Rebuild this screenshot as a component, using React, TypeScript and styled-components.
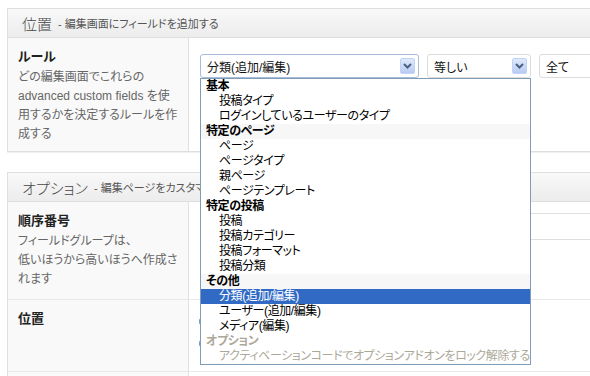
import React from "react";
import styled, { createGlobalStyle } from "styled-components";

const GlobalStyle = createGlobalStyle`
  html, body {
    margin: 0;
    padding: 0;
    background: #ffffff;
    overflow: hidden;
  }
  body {
    font-family: "Liberation Sans", "Noto Sans CJK JP", sans-serif;
    font-size: 12px;
    color: #333;
    font-feature-settings: "palt";
  }
`;

const Page = styled.div`
  padding: 8px 0 0 7px;
  width: 640px;
`;

const Box = styled.div`
  border: 1px solid #dfdfdf;
  background: #fff;
  margin-bottom: 20px;
  box-shadow: 0 1px 0 #f0f0f0;
`;

const Header = styled.div`
  height: 28px;
  display: flex;
  align-items: center;
  padding-left: 14px;
  background: linear-gradient(to bottom, #f9f9f9, #ececec);
  border-bottom: 1px solid #dfdfdf;
  color: #464646;
`;

const Title = styled.span`
  font-size: 15px;
  font-weight: 300;
  margin-right: 6px;
`;

const Sub = styled.span`
  font-size: 11px;
  color: #555;
`;

const Row = styled.div`
  display: grid;
  grid-template-columns: 181px 1fr;
  & + & {
    border-top: 1px solid #e8e8e8;
  }
`;

const LabelCell = styled.div<{ $bottom?: number }>`
  background: #f9f9f9;
  border-right: 1px solid #e1e1e1;
  padding: 9px 10px ${(p) => p.$bottom ?? 8}px 10px;
`;

const Label = styled.div`
  font-size: 13px;
  font-weight: bold;
  line-height: 19px;
  margin-bottom: 2px;
  color: #222;
`;

const Desc = styled.p`
  margin: 0;
  font-size: 12px;
  line-height: 19px;
  color: #666;
`;

const Field = styled.div<{ $pad: string }>`
  padding: ${(p) => p.$pad};
`;

const SelectRow = styled.div`
  display: flex;
  gap: 8px;
  align-items: flex-start;
`;

const SelectWrap = styled.div`
  position: relative;
`;

const Select = styled.div<{ $w: number; $focus?: boolean }>`
  box-sizing: border-box;
  width: ${(p) => p.$w}px;
  height: 24px;
  border: 1px solid ${(p) => (p.$focus ? "#a7bcd9" : "#dcdcdc")};
  border-radius: 3px;
  background: #fff;
  display: flex;
  align-items: center;
  padding: 0 3px 0 6px;
  font-size: 12px;
  color: #111;
`;

const SelectText = styled.span`
  flex: 1;
  white-space: nowrap;
`;

const ArrowBtn = styled.span`
  width: 15px;
  height: 16px;
  box-sizing: border-box;
  border: 1px solid #c3d3f7;
  border-radius: 2px;
  background: linear-gradient(to bottom, #dfe8fc, #b8cbf3);
  display: flex;
  align-items: center;
  justify-content: center;
`;

const List = styled.div`
  position: absolute;
  top: 24px;
  left: 0;
  width: 331px;
  box-sizing: border-box;
  border: 1px solid #7f9db9;
  background: #fff;
  z-index: 10;
`;

const Item = styled.div<{ $group?: boolean; $sel?: boolean; $off?: boolean; $shade?: boolean }>`
  height: 15px;
  line-height: 15px;
  font-size: 12px;
  letter-spacing: -0.4px;
  white-space: nowrap;
  padding-left: ${(p) => (p.$group ? 5 : 18)}px;
  font-weight: ${(p) => (p.$group ? "bold" : "normal")};
  color: ${(p) => (p.$sel ? "#fff" : p.$off ? "#aca899" : "#000")};
  background: ${(p) => (p.$sel ? "#316ac5" : p.$shade ? "#f7f7f7" : "transparent")};
`;

const Input = styled.div`
  height: 27px;
  box-sizing: border-box;
  border: 1px solid #dfdfdf;
  border-radius: 3px;
  background: #fff;
`;

const RadioList = styled.div`
  display: flex;
  flex-direction: column;
`;

const RadioRow = styled.div`
  height: 22px;
  display: flex;
  align-items: center;
`;

const Radio = styled.span`
  width: 13px;
  height: 13px;
  box-sizing: border-box;
  border-radius: 50%;
  border: 1px solid #5a86b9;
  background: #eaf1fa;
`;

const Chevron = () => (
  <svg width="9" height="6" viewBox="0 0 9 6">
    <path d="M1 1 L4.5 4.5 L8 1" fill="none" stroke="#4d6185" strokeWidth="2" />
  </svg>
);

type Opt = { text: string; group?: boolean; sel?: boolean; off?: boolean; shade?: boolean };

const options: Opt[] = [
  { text: "基本", group: true },
  { text: "投稿タイプ" },
  { text: "ログインしているユーザーのタイプ" },
  { text: "特定のページ", group: true, shade: true },
  { text: "ページ" },
  { text: "ページタイプ" },
  { text: "親ページ" },
  { text: "ページテンプレート" },
  { text: "特定の投稿", group: true },
  { text: "投稿" },
  { text: "投稿カテゴリー" },
  { text: "投稿フォーマット" },
  { text: "投稿分類" },
  { text: "その他", group: true, shade: true },
  { text: "分類(追加/編集)", sel: true },
  { text: "ユーザー(追加/編集)" },
  { text: "メディア(編集)" },
  { text: "オプション", group: true, off: true },
  { text: "アクティベーションコードでオプションアドオンをロック解除する", off: true },
];

export default function App() {
  return (
    <>
      <GlobalStyle />
      <Page>
        <Box>
          <Header>
            <Title>位置</Title>
            <Sub>- 編集画面にフィールドを追加する</Sub>
          </Header>
          <Row>
            <LabelCell $bottom={7}>
              <Label>ルール</Label>
              <Desc>
                どの編集画面でこれらの
                <br />
                advanced custom fields を使
                <br />
                用するかを決定するルールを作
                <br />
                成する
              </Desc>
            </LabelCell>
            <Field $pad="16px 0 0 11px">
              <SelectRow>
                <SelectWrap>
                  <Select $w={219} $focus>
                    <SelectText>分類(追加/編集)</SelectText>
                    <ArrowBtn>
                      <Chevron />
                    </ArrowBtn>
                  </Select>
                  <List>
                    {options.map((o) => (
                      <Item key={o.text} $group={o.group} $sel={o.sel} $off={o.off} $shade={o.shade}>
                        {o.text}
                      </Item>
                    ))}
                  </List>
                </SelectWrap>
                <Select $w={104}>
                  <SelectText>等しい</SelectText>
                  <ArrowBtn>
                    <Chevron />
                  </ArrowBtn>
                </Select>
                <Select $w={120}>
                  <SelectText>全て</SelectText>
                </Select>
              </SelectRow>
            </Field>
          </Row>
        </Box>

        <Box>
          <Header>
            <Title>オプション</Title>
            <Sub>- 編集ページをカスタマイズ</Sub>
          </Header>
          <Row>
            <LabelCell $bottom={10}>
              <Label>順序番号</Label>
              <Desc>
                フィールドグループは、
                <br />
                低いほうから高いほうへ作成さ
                <br />
                れます
              </Desc>
            </LabelCell>
            <Field $pad="11px 0 0 11px">
              <Input />
            </Field>
          </Row>
          <Row>
            <LabelCell>
              <Label>位置</Label>
            </LabelCell>
            <Field $pad="10px 0 17px 10px">
              <RadioList>
                <RadioRow>
                  <Radio />
                </RadioRow>
                <RadioRow>
                  <Radio />
                </RadioRow>
              </RadioList>
            </Field>
          </Row>
          <Row>
            <LabelCell />
            <Field $pad="20px 0 0 11px" />
          </Row>
        </Box>
      </Page>
    </>
  );
}
